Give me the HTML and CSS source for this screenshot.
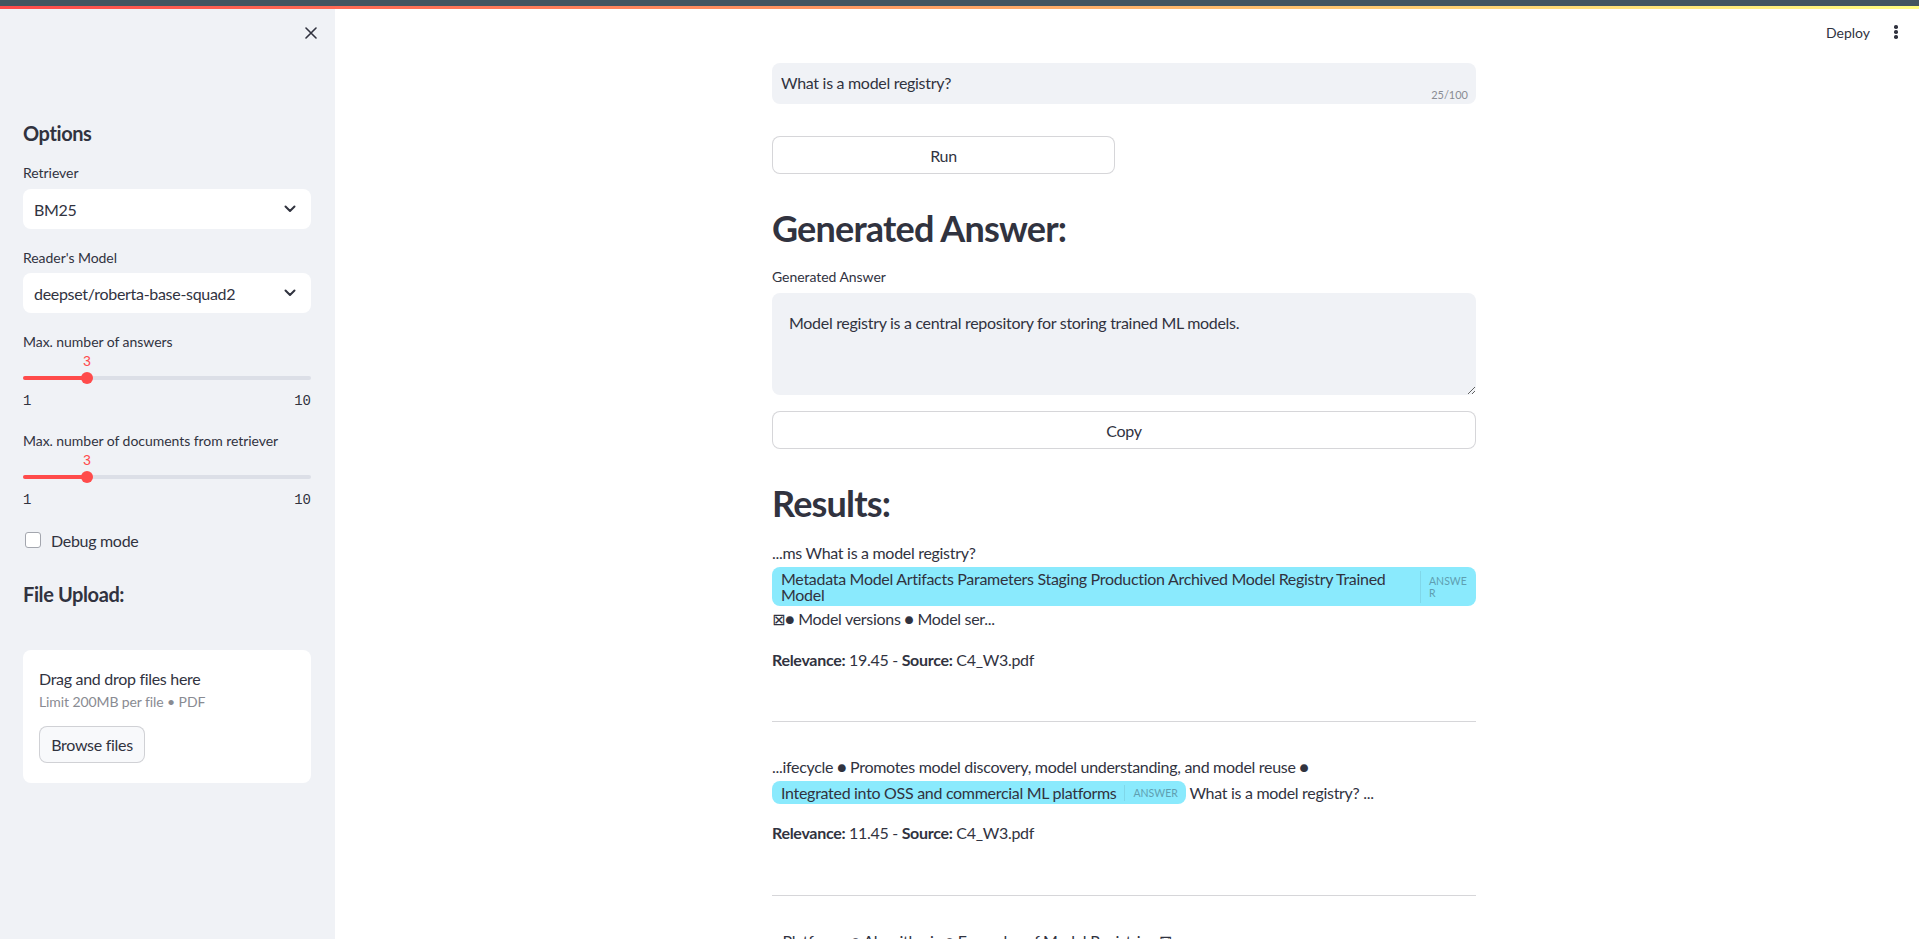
FILE: index.html
```html
<!DOCTYPE html>
<html lang="en">
<head>
<meta charset="utf-8">
<title>Ask the docs</title>
<link rel="stylesheet" href="styles.css">
</head>
<body>
<div class="topbar"></div>
<div class="decoration"></div>
<div class="app">
  <aside class="sidebar">
    <div class="sb-head">
      <button class="close-btn" aria-label="Close sidebar">
        <svg width="12" height="12" viewBox="0 0 12 12"><path d="M1 1L11 11M11 1L1 11" stroke="#31333f" stroke-width="1.6" stroke-linecap="round" fill="none"/></svg>
      </button>
    </div>
    <h3 class="sb-title sb-title-options">Options</h3>

    <div class="wlabel lbl-first">Retriever</div>
    <div class="select sel-first">
      <span>BM25</span>
      <svg class="chev" width="12" height="8" viewBox="0 0 12 8"><path d="M1.5 1.5L6 6L10.5 1.5" stroke="#31333f" stroke-width="2" fill="none" stroke-linecap="round" stroke-linejoin="round"/></svg>
    </div>

    <div class="wlabel lbl-next">Reader's Model</div>
    <div class="select sel-next">
      <span>deepset/roberta-base-squad2</span>
      <svg class="chev" width="12" height="8" viewBox="0 0 12 8"><path d="M1.5 1.5L6 6L10.5 1.5" stroke="#31333f" stroke-width="2" fill="none" stroke-linecap="round" stroke-linejoin="round"/></svg>
    </div>

    <div class="wlabel lbl-slider1">Max. number of answers</div>
    <div class="slider">
      <div class="slider-value-row"><span class="slider-value" style="left:22.22%">3</span></div>
      <div class="slider-track"><div class="slider-fill" style="width:22.22%"></div><div class="slider-thumb" style="left:22.22%"></div></div>
      <div class="slider-ticks"><span>1</span><span>10</span></div>
    </div>

    <div class="wlabel lbl-slider2">Max. number of documents from retriever</div>
    <div class="slider">
      <div class="slider-value-row"><span class="slider-value" style="left:22.22%">3</span></div>
      <div class="slider-track"><div class="slider-fill" style="width:22.22%"></div><div class="slider-thumb" style="left:22.22%"></div></div>
      <div class="slider-ticks"><span>1</span><span>10</span></div>
    </div>

    <label class="checkbox-row"><span class="checkbox"></span><span>Debug mode</span></label>

    <h3 class="sb-title sb-title-upload">File Upload:</h3>

    <div class="uploader">
      <div class="up-title">Drag and drop files here</div>
      <div class="up-limit">Limit 200MB per file • PDF</div>
      <button class="browse-btn">Browse files</button>
    </div>
  </aside>

  <main class="main">
    <header class="header">
      <button class="deploy-btn">Deploy</button>
      <button class="kebab" aria-label="Main menu"><span></span><span></span><span></span></button>
    </header>
    <div class="content">
      <div class="block">
        <div class="query">
          <input class="query-input" type="text" value="What is a model registry?">
          <span class="counter">25/100</span>
        </div>
        <button class="btn run-btn">Run</button>

        <h2 class="heading heading-gen">Generated Answer:</h2>
        <div class="field-label">Generated Answer</div>
        <textarea class="answer-box" readonly>Model registry is a central repository for storing trained ML models.</textarea>
        <button class="btn copy-btn">Copy</button>

        <h2 class="heading heading-results">Results:</h2>

        <p class="passage passage-first">...ms What is a model registry? <span class="anno"><span class="anno-text">Metadata Model Artifacts Parameters Staging Production Archived Model Registry Trained Model</span><span class="anno-label anno-label-narrow">ANSWER</span></span> ⊠● Model versions ● Model ser...</p>
        <p class="relevance"><strong>Relevance:</strong> 19.45 - <strong>Source:</strong> C4_W3.pdf</p>
        <hr class="divider">

        <p class="passage">...ifecycle ● Promotes model discovery, model understanding, and model reuse ● <span class="anno"><span class="anno-text">Integrated into OSS and commercial ML platforms</span><span class="anno-label">ANSWER</span></span> What is a model registry? ...</p>
        <p class="relevance"><strong>Relevance:</strong> 11.45 - <strong>Source:</strong> C4_W3.pdf</p>
        <hr class="divider">

        <p class="passage">...Platforms ● Algorithmic ● Examples of Model Registries ⊠</p>
      </div>
    </div>
  </main>
</div>
</body>
</html>
```

FILE: styles.css
```css
* { box-sizing: border-box; }

html, body {
  margin: 0;
  height: 100%;
  overflow: hidden;
}

body {
  font-family: Lato, "Noto Sans", "DejaVu Sans", sans-serif;
  font-size: 16px;
  letter-spacing: -0.3px;
  color: #31333f;
  background: #ffffff;
}

button {
  font-family: inherit;
  color: inherit;
  letter-spacing: inherit;
}

.topbar {
  height: 6px;
  background: #435560;
}

.decoration {
  height: 3px;
  background: linear-gradient(90deg, #ff4b4b, #fffd80);
}

.app {
  display: flex;
  height: calc(100% - 9px);
}

/* ---------- Sidebar ---------- */
.sidebar {
  width: 335px;
  flex: none;
  background: #f0f2f6;
  padding: 0 24px 0 23px;
  display: flex;
  flex-direction: column;
}

.sidebar > * { flex: none; }

.sb-head {
  height: 48px;
  display: flex;
  align-items: center;
  justify-content: flex-end;
}

.close-btn {
  width: 12px;
  height: 12px;
  padding: 0;
  border: 0;
  background: none;
  margin-right: -6px;
  display: flex;
}

.sb-title {
  margin: 0;
  font-size: 20px;
  line-height: 24px;
  font-weight: 700;
  letter-spacing: -0.4px;
}

.sb-title-options { margin-top: 64px; }
.sb-title-upload { margin-top: 32px; }

.wlabel {
  font-size: 14px;
  line-height: 20px;
  letter-spacing: -0.05px;
}

.lbl-first { margin-top: 18px; }
.lbl-next { margin-top: 19px; }
.lbl-slider1 { margin-top: 19px; }
.lbl-slider2 { margin-top: 20px; }

.select {
  height: 40px;
  background: #ffffff;
  border-radius: 8px;
  display: flex;
  align-items: center;
  justify-content: space-between;
  padding: 0 15px 0 11px;
  font-size: 16px;
}

.sel-first { margin-top: 6px; }
.sel-next { margin-top: 5px; }

/* Slider */
.slider-value-row {
  position: relative;
  height: 18px;
}

.slider-value {
  position: absolute;
  top: 1px;
  transform: translateX(-50%);
  font-family: "Liberation Mono", "DejaVu Sans Mono", monospace;
  font-size: 14px;
  line-height: 18px;
  letter-spacing: 0;
  color: #ff4b4b;
}

.slider-track {
  position: relative;
  height: 4px;
  margin-top: 6px;
  background: #dcdfe7;
  border-radius: 2px;
}

.slider-fill {
  height: 100%;
  background: #ff4b4b;
  border-radius: 2px;
}

.slider-thumb {
  position: absolute;
  top: 50%;
  width: 12px;
  height: 12px;
  border-radius: 50%;
  background: #ff4b4b;
  transform: translate(-50%, -50%);
}

.slider-ticks {
  display: flex;
  justify-content: space-between;
  margin-top: 11px;
  font-family: "Liberation Mono", "DejaVu Sans Mono", monospace;
  font-size: 14px;
  line-height: 20px;
  letter-spacing: 0;
}

/* Checkbox */
.checkbox-row {
  margin-top: 20px;
  height: 20px;
  display: flex;
  align-items: center;
  gap: 10px;
  font-size: 16px;
}

.checkbox {
  width: 16px;
  height: 16px;
  margin-left: 2px;
  border: 1px solid #a3a6ae;
  border-radius: 3px;
  background: #ffffff;
}

/* Uploader */
.uploader {
  margin-top: 44px;
  height: 133px;
  background: #ffffff;
  border-radius: 8px;
  padding: 16px;
  display: flex;
  flex-direction: column;
  align-items: flex-start;
}

.up-title {
  font-size: 16px;
  line-height: 25.6px;
}

.up-limit {
  font-size: 14px;
  line-height: 20px;
  letter-spacing: -0.1px;
  color: #898b92;
}

.browse-btn {
  margin-top: 14px;
  height: 37px;
  width: 106px;
  padding: 0;
  font-size: 16px;
  background: #f8f9fb;
  border: 1px solid rgba(49, 51, 63, 0.2);
  border-radius: 8px;
}

/* ---------- Main ---------- */
.main {
  flex: 1;
  min-width: 0;
  display: flex;
  flex-direction: column;
  overflow: hidden;
}

.header {
  height: 46px;
  flex: none;
  display: flex;
  align-items: center;
  justify-content: flex-end;
  padding-right: 11px;
  gap: 2px;
}

.deploy-btn {
  border: 0;
  background: none;
  font-size: 14px;
  letter-spacing: 0;
  padding: 4px 12px;
}

.kebab {
  width: 24px;
  height: 24px;
  border: 0;
  background: none;
  padding: 0;
  display: flex;
  flex-direction: column;
  align-items: center;
  justify-content: center;
  gap: 1.5px;
}

.kebab span {
  width: 3.5px;
  height: 3.5px;
  border-radius: 50%;
  background: #31333f;
}

.content {
  flex: 1;
  padding-right: 6px;
  display: flex;
  justify-content: center;
}

.block {
  width: 704px;
  display: flex;
  flex-direction: column;
  align-items: flex-start;
}

.block > * { flex: none; }

.query {
  position: relative;
  margin-top: 8px;
  width: 100%;
  height: 41px;
}

.query-input {
  width: 100%;
  height: 100%;
  border: 0;
  border-radius: 8px;
  background: #f0f2f6;
  padding: 0 9px 2px;
  font-family: inherit;
  font-size: 16px;
  letter-spacing: -0.3px;
  color: #31333f;
  outline: none;
}

.counter {
  position: absolute;
  right: 8px;
  bottom: 3px;
  font-size: 11px;
  line-height: 13px;
  letter-spacing: 0;
  color: #8a8c93;
}

.btn {
  height: 38px;
  background: #ffffff;
  border: 1px solid rgba(49, 51, 63, 0.2);
  border-radius: 8px;
  font-size: 16px;
  padding: 0;
}

.run-btn {
  margin-top: 32px;
  width: 343px;
}

.copy-btn {
  margin-top: 16px;
  width: 100%;
}

.heading {
  margin: 0;
  font-size: 36px;
  line-height: 43px;
  font-weight: 700;
  letter-spacing: -0.8px;
}

.heading-gen { margin-top: 33px; }
.heading-results { margin-top: 33px; }

.field-label {
  margin-top: 17px;
  font-size: 14px;
  line-height: 20px;
  letter-spacing: -0.05px;
}

.answer-box {
  margin-top: 6px;
  width: 100%;
  height: 102px;
  border: 0;
  border-radius: 8px;
  background: #f0f2f6;
  padding: 17px 17px;
  font-family: inherit;
  font-size: 16px;
  line-height: 25.6px;
  letter-spacing: -0.3px;
  color: #31333f;
  resize: vertical;
  outline: none;
}

.passage,
.relevance {
  margin: 0;
  width: 100%;
  line-height: 25.6px;
}

.passage { margin-top: 32px; }
.passage-first { margin-top: 15px; }
.relevance { margin-top: 15px; }

.divider {
  width: 100%;
  margin: 49px 0 0;
  border: 0;
  border-top: 1px solid rgba(49, 51, 63, 0.2);
}

.anno {
  display: inline-flex;
  align-items: stretch;
  max-width: 100%;
  background: #8aeafd;
  border-radius: 8px;
  padding: 3.5px 8px 3.5px 9px;
  line-height: 16px;
}

.anno-text {
  flex: 1 1 auto;
}

.anno-label {
  flex: none;
  display: flex;
  align-items: center;
  margin-left: 8px;
  padding-left: 8px;
  border-left: 1px solid rgba(49, 51, 63, 0.1);
  font-size: 10.5px;
  line-height: 12px;
  letter-spacing: 0;
  color: #5f9fb1;
}

.anno-label-narrow {
  width: 48px;
  word-break: break-all;
}
```
